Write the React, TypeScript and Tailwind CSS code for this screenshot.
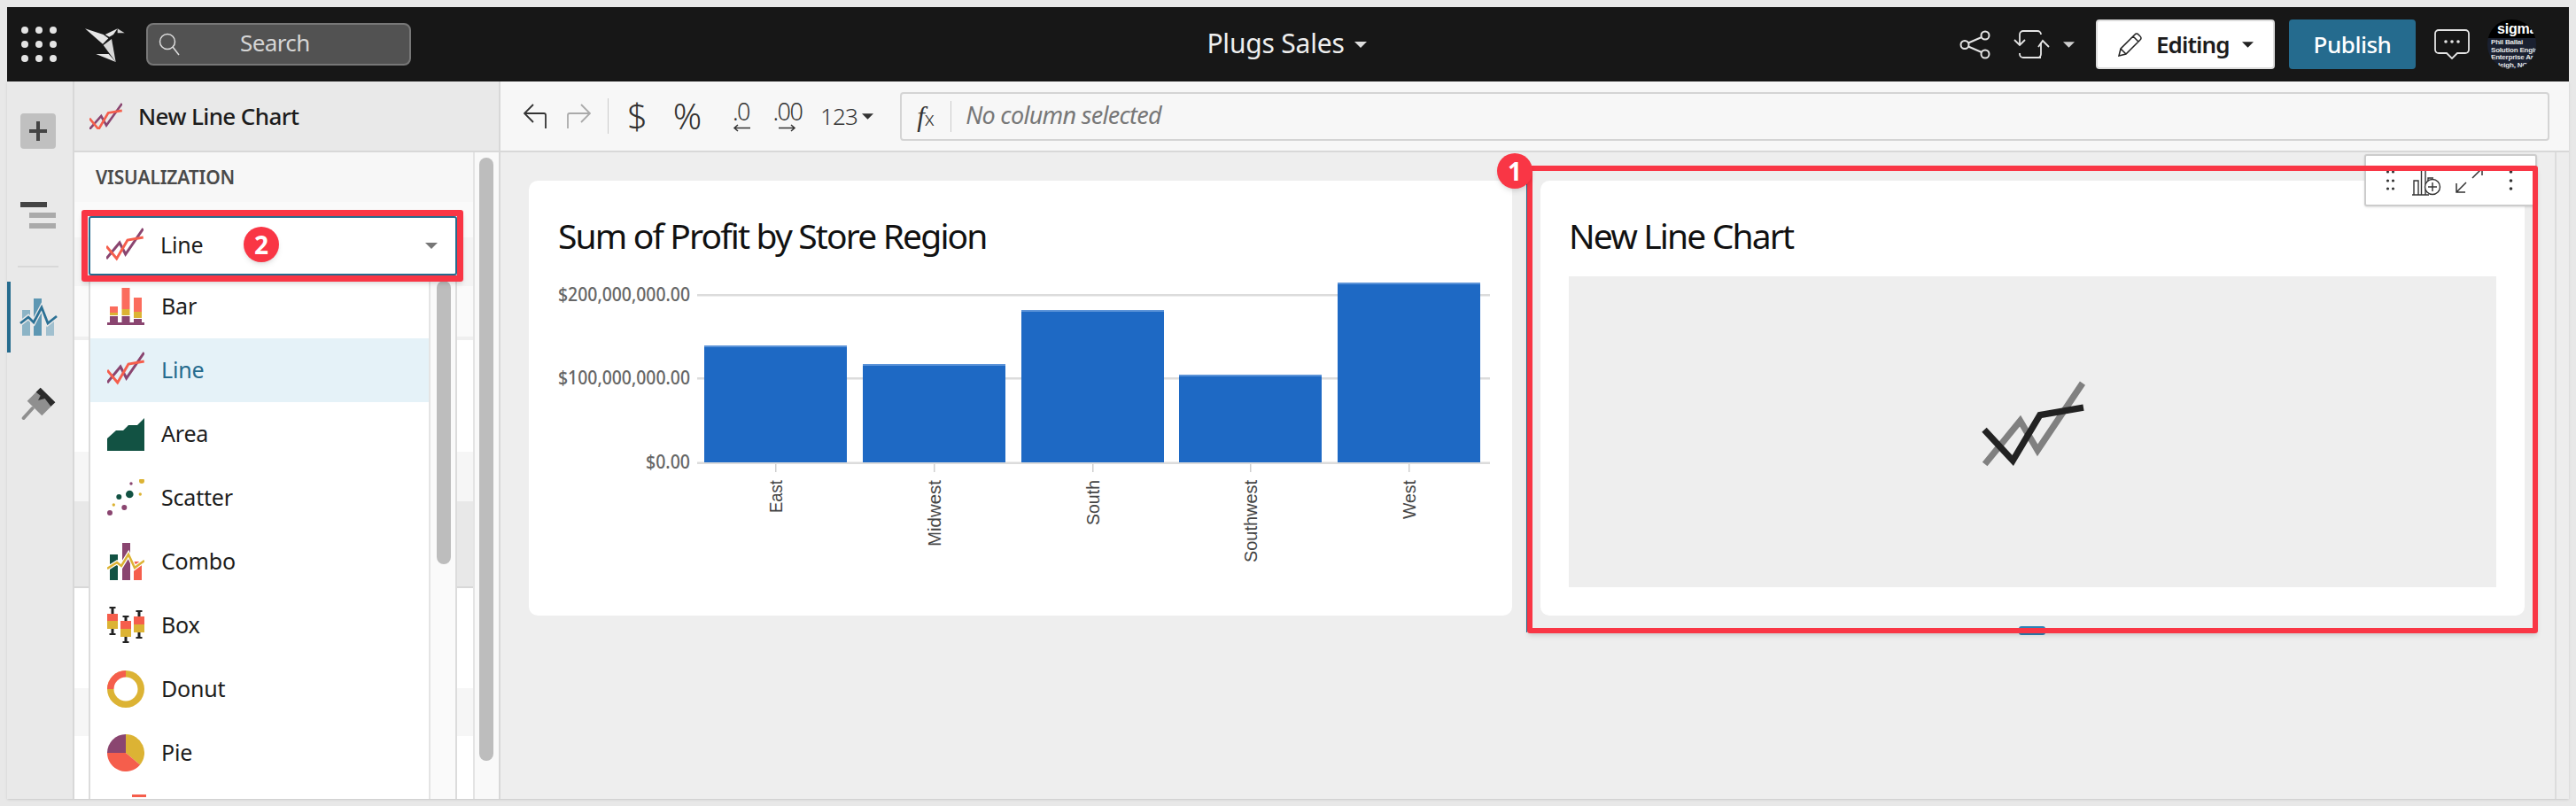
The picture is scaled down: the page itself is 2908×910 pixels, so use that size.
import type { ReactNode } from 'react';

const CORAL = '#f55e4c';
const GOLD = '#dcb334';
const PURPLE = '#8a4570';
const GREEN = '#125243';

function polar(r: number, deg: number) {
  const a = ((deg - 90) * Math.PI) / 180;
  return `${21 + r * Math.cos(a)} ${21 + r * Math.sin(a)}`;
}

function slice(r: number, from: number, to: number) {
  const large = to - from > 180 ? 1 : 0;
  return `M21 21L${polar(r, from)}A${r} ${r} 0 ${large} 1 ${polar(r, to)}Z`;
}

function Ico({ children }: { children: ReactNode }) {
  return (
    <svg width="42" height="42" viewBox="0 0 42 42" className="shrink-0">
      {children}
    </svg>
  );
}

function LineIcon() {
  return (
    <Ico>
      <polyline points="0,35 15,17 21.7,30 41.7,1" fill="none" stroke={PURPLE} strokeWidth="3" />
      <polyline points="0,21 11.7,35 24,14 41.7,11" fill="none" stroke={CORAL} strokeWidth="3" />
    </Ico>
  );
}

function BarIcon() {
  return (
    <Ico>
      <rect x="3" y="21" width="9" height="7" fill="#fb6c5d" />
      <rect x="3" y="28" width="9" height="3" fill={GOLD} />
      <rect x="3" y="32" width="9" height="7" fill={PURPLE} />
      <rect x="16.500" y="0" width="9" height="24" fill="#fb6c5d" />
      <rect x="16.500" y="24" width="9" height="7" fill={GOLD} />
      <rect x="16.500" y="32" width="9" height="7" fill={PURPLE} />
      <rect x="30" y="11" width="9" height="16" fill="#fb6c5d" />
      <rect x="30" y="27" width="9" height="7" fill={GOLD} />
      <rect x="30" y="35" width="9" height="4" fill={PURPLE} />
      <rect x="0" y="39" width="42" height="3" fill={PURPLE} />
    </Ico>
  );
}

function AreaIcon() {
  return (
    <Ico>
      <polygon points="0,40 0,26 10,17 18,17 24,11 34,11 42,3 42,40" fill={GREEN} />
    </Ico>
  );
}

function ScatterIcon() {
  return (
    <Ico>
      <circle cx="39" cy="2" r="3" fill={GOLD} />
      <circle cx="27" cy="5" r="1.700" fill={PURPLE} />
      <circle cx="25.300" cy="17" r="4.300" fill={GREEN} />
      <circle cx="37.300" cy="17" r="1.700" fill={GOLD} />
      <circle cx="13.300" cy="20" r="3" fill={GREEN} />
      <circle cx="7.300" cy="29" r="1.700" fill={GOLD} />
      <circle cx="19.300" cy="32" r="3" fill={PURPLE} />
      <circle cx="3" cy="38" r="3" fill={PURPLE} />
    </Ico>
  );
}

function ComboIcon() {
  return (
    <Ico>
      <rect x="3" y="13" width="9" height="29" fill={GREEN} />
      <polygon points="17,0 26,0 26,42 17,42" fill={PURPLE} />
      <rect x="30" y="21" width="9" height="21" fill={CORAL} />
      <polyline points="0,29 11,22 16,26 24,13 31,28 42,20" fill="none" stroke="#fff" strokeWidth="5" />
      <polyline points="0,29 11,22 16,26 24,13 31,28 42,20" fill="none" stroke={GOLD} strokeWidth="2.500" />
    </Ico>
  );
}

function BoxPlot({ x, top, a, b, c, bottom }: { x: number; top: number; a: number; b: number; c: number; bottom: number }) {
  return (
    <g>
      <rect x={x + 4.500} y={top} width="3" height={bottom - top} fill="#222" />
      <rect x={x + 2.500} y={top} width="7" height="2" fill="#222" />
      <rect x={x + 2.500} y={bottom - 2} width="7" height="2" fill="#222" />
      <rect x={x} y={a} width="12" height={b - a} fill={CORAL} />
      <rect x={x} y={b} width="12" height={c - b} fill={GOLD} />
    </g>
  );
}

function BoxIcon() {
  return (
    <Ico>
      <BoxPlot x={0} top={0} a={8} b={16} c={25} bottom={32} />
      <BoxPlot x={15} top={10} a={16} b={25} c={34} bottom={41} />
      <BoxPlot x={30} top={4} a={11} b={20} c={29} bottom={36} />
    </Ico>
  );
}

function DonutIcon() {
  return (
    <Ico>
      <circle cx="21" cy="21" r="21" fill={GOLD} />
      <path d={slice(21, 270, 360)} fill={CORAL} />
      <circle cx="21" cy="21" r="13.500" fill="#fff" />
    </Ico>
  );
}

function PieIcon() {
  return (
    <Ico>
      <path d={slice(21, 0, 130)} fill={GOLD} />
      <path d={slice(21, 130, 270)} fill={CORAL} />
      <path d={slice(21, 270, 360)} fill={PURPLE} />
    </Ico>
  );
}

const chartTypes = [
  { name: 'Bar', icon: <BarIcon /> },
  { name: 'Line', icon: <LineIcon />, active: true },
  { name: 'Area', icon: <AreaIcon /> },
  { name: 'Scatter', icon: <ScatterIcon /> },
  { name: 'Combo', icon: <ComboIcon /> },
  { name: 'Box', icon: <BoxIcon /> },
  { name: 'Donut', icon: <DonutIcon /> },
  { name: 'Pie', icon: <PieIcon /> },
];

// striped rows sitting behind the dropdown
const panelRows = [
  { h: 55, c: 'bg-[#f4f4f4]' },
  { h: 57, c: 'bg-[#fafafa]' },
  { h: 4, c: 'bg-[#efefef]' },
  { h: 56, c: 'bg-[#ffffff]' },
  { h: 70, c: 'bg-[#ffffff]' },
  { h: 56, c: 'bg-[#f6f6f6]' },
  { h: 96, c: 'bg-[#e8e8e8]' },
  { h: 2, c: 'bg-[#d8d8d8]' },
  { h: 113, c: 'bg-[#ffffff]' },
  { h: 54, c: 'bg-[#f6f6f6]' },
  { h: 71, c: 'bg-[#ffffff]' },
];

const bars = [
  { name: 'East', x: 795, top: 390, len: 37 },
  { name: 'Midwest', x: 974, top: 411, len: 75 },
  { name: 'South', x: 1153, top: 350, len: 51 },
  { name: 'Southwest', x: 1331, top: 423, len: 93 },
  { name: 'West', x: 1510, top: 319, len: 44 },
];

function ProfitChart() {
  return (
    <svg width="1060" height="351" viewBox="630 312 1060 351" className="block">
      {[333, 427, 522.500].map((y) => (
        <rect key={y} x="787" y={y - 1} width="895" height="2.500" fill="#dcdcdc" />
      ))}
      {[
        { y: 333, t: '$200,000,000.00', l: 149 },
        { y: 427, t: '$100,000,000.00', l: 149 },
        { y: 522, t: '$0.00', l: 50 },
      ].map((a) => (
        <text key={a.t} x="779" y={a.y + 7} textAnchor="end" fontSize="22" fontWeight="500" fill="#666" textLength={a.l} lengthAdjust="spacingAndGlyphs" fontFamily="Noto Sans, sans-serif">
          {a.t}
        </text>
      ))}
      {bars.map((b) => (
        <g key={b.name}>
          <rect x={b.x} y={b.top} width="161" height={522 - b.top} fill="#1e69c4" />
          <rect x={b.x} y={b.top} width="161" height="2" fill="#5b93d8" />
          <rect x={b.x + 80} y="524" width="1.500" height="9" fill="#cfcfcf" />
          <text
            transform={`translate(${b.x + 87.500} 542) rotate(-90)`}
            textAnchor="end"
            fontSize="21"
            fill="#444"
            textLength={b.len}
            lengthAdjust="spacingAndGlyphs"
            fontFamily="Liberation Sans, sans-serif">
            {b.name}
          </text>
        </g>
      ))}
    </svg>
  );
}

function Caret({ className }: { className: string }) {
  return (
    <svg viewBox="0 0 14 7" className={className}>
      <polygon points="0,0 14,0 7,7" fill="currentColor" />
    </svg>
  );
}

function DecimalGlyph({ label, dir }: { label: string; dir: 'left' | 'right' }) {
  return (
    <span className="flex flex-col items-center w-full">
      <span className="text-[27px] leading-[26px] font-light tracking-[-1.5px] text-[#333]">{label}</span>
      <svg width="20" height="9" viewBox="0 0 20 9" className="mt-[1px]">
        {dir === 'left' ? (
          <path d="M20 4.500H2M6 1L2 4.500L6 8" fill="none" stroke="#333" strokeWidth="1.500" />
        ) : (
          <path d="M0 4.500H18M14 1L18 4.500L14 8" fill="none" stroke="#333" strokeWidth="1.500" />
        )}
      </svg>
    </span>
  );
}

function TopBar() {
  return (
    <header className="h-[84px] bg-[#171717] flex items-center shrink-0">
      <div className="flex-1 flex items-center pl-[16px]">
        <svg width="40" height="40" viewBox="0 0 40 40" className="shrink-0">
          {[4, 20, 36].map((y) =>
            [4, 20, 36].map((x) => <circle key={`${x}-${y}`} cx={x} cy={y} r="4" fill="#e4e4e4" />),
          )}
        </svg>
        <svg width="60" height="50" viewBox="0 0 180 150" className="ml-[26px] shrink-0">
          <polygon points="18,22 80,42 97,55 78,74" fill="#e6e6e6" />
          <polygon points="108,57 80,78 122,135" fill="#d8d8d8" />
          <polygon points="86,42 128,22 114,42 100,50" fill="#e6e6e6" />
          <polygon points="128,22 152,37 128,37" fill="#cfcfcf" />
          <polygon points="55,108 98,108 122,135" fill="#e6e6e6" />
        </svg>
        <div className="ml-[15px] w-[299px] h-[48px] rounded-[8px] bg-[#525252] border-2 border-[#777] flex items-center relative">
          <svg width="24" height="26" viewBox="0 0 24 26" className="ml-[12px] shrink-0">
            <circle cx="10" cy="10" r="8.500" fill="none" stroke="#ddd" strokeWidth="1.500" />
            <path d="M16 16L23 25" stroke="#ddd" strokeWidth="1.500" />
          </svg>
          <span className="ml-[68px] mt-[-3px] text-[26px] text-[#d5d5d5] tracking-[-0.6px]">Search</span>
        </div>
      </div>
      <div className="ml-[18px] flex items-center text-[#eeeeee] text-[30px] tracking-[-0.2px]">
        <span className="mt-[-3px]">Plugs Sales</span>
        <Caret className="w-[14px] h-[7px] ml-[11px] text-[#ddd]" />
      </div>
      <div className="flex-1 flex items-center justify-end pr-[37px]">
        <svg width="36" height="33" viewBox="0 0 36 33" className="shrink-0">
          <circle cx="29" cy="6" r="4.500" fill="none" stroke="#e4e4e4" strokeWidth="2" />
          <circle cx="6" cy="16.500" r="4.500" fill="none" stroke="#e4e4e4" strokeWidth="2" />
          <circle cx="29" cy="27" r="4.500" fill="none" stroke="#e4e4e4" strokeWidth="2" />
          <path d="M10 14.500L25 8M10 18.500L25 25" stroke="#e4e4e4" strokeWidth="2" />
        </svg>
        <svg width="41" height="32" viewBox="0 0 41 32" className="ml-[25px] shrink-0">
          <path d="M7 16V5a4 4 0 0 1 4-4H27a4 4 0 0 1 4 4V5M31 31H11M31 31M31 14V27a4 4 0 0 1-4 4M7 26V27a4 4 0 0 0 4 4" fill="none" stroke="#e4e4e4" strokeWidth="1.800" />
          <path d="M1 11L7 17L13 11M28 19L33 12L40 19" fill="none" stroke="#e4e4e4" strokeWidth="1.800" />
        </svg>
        <Caret className="w-[13px] h-[7px] ml-[15px] text-[#cfcfcf]" />
        <button className="ml-[24px] w-[202px] h-[56px] bg-white rounded-[4px] border-2 border-[#ddd] flex items-center pl-[23px]">
          <svg width="27" height="27" viewBox="0 0 27 27" className="shrink-0">
            <path d="M1 26L3 18L19 2a2.500 2.500 0 0 1 4 0L25 4a2.500 2.500 0 0 1 0 4L9 24ZM3 18L9 24M17 4L23 10" fill="none" stroke="#222" strokeWidth="1.500" />
          </svg>
          <span className="ml-[16px] text-[26px] font-semibold text-[#1c1c1c] tracking-[-0.9px]">Editing</span>
          <Caret className="w-[13px] h-[7px] ml-[14px] text-[#222]" />
        </button>
        <button className="ml-[16px] w-[143px] h-[56px] bg-[#256b8e] rounded-[4px] text-white text-[26px] font-medium tracking-[-0.5px]">
          Publish
        </button>
        <svg width="40" height="34" viewBox="0 0 40 34" className="ml-[21px] shrink-0">
          <path d="M5 1H35a4 4 0 0 1 4 4V23a4 4 0 0 1-4 4H26L20 33L14 27H5a4 4 0 0 1-4-4V5a4 4 0 0 1 4-4Z" fill="none" stroke="#e4e4e4" strokeWidth="1.800" />
          <circle cx="13" cy="14" r="1.800" fill="#e4e4e4" />
          <circle cx="20" cy="14" r="1.800" fill="#e4e4e4" />
          <circle cx="27" cy="14" r="1.800" fill="#e4e4e4" />
        </svg>
        <div className="ml-[20px] w-[55px] h-[56px] rounded-full overflow-hidden flex flex-col shrink-0">
          <div className="h-[22px] bg-black flex items-center pl-[7px] gap-[4px]">
            <svg width="9" height="16" viewBox="0 0 9 16">
              <polygon points="1,1 8,0 6,5 8,15 1,15 4,8" fill="#2fb9a0" />
            </svg>
            <span className="text-[16px] leading-[20px] font-bold text-white tracking-[-0.2px] font-['Liberation_Sans',sans-serif]">sigma</span>
          </div>
          <div className="flex-1 bg-[#1a2030] pl-[4px] pt-[1px] text-[8px] leading-[8.5px] font-bold whitespace-nowrap text-[#e4e4e4] tracking-[-0.2px] font-['Liberation_Sans',sans-serif]">
            <div>Phil Ballai</div>
            <div>Solution Engine</div>
            <div>Enterprise Arch</div>
            <div className="pl-[8px]">leigh, NC</div>
          </div>
        </div>
      </div>
    </header>
  );
}

function Rail() {
  return (
    <aside className="w-[76px] shrink-0 bg-[#e9e9e9] border-r-2 border-[#d8d8d8] flex flex-col">
      <button className="ml-[15px] mt-[36px] w-[40px] h-[40px] bg-[#c0c0c0] rounded-[4px] flex items-center justify-center">
        <svg width="20" height="22" viewBox="0 0 20 22">
          <path d="M0 11H20M10 0V22" stroke="#444" strokeWidth="4" />
        </svg>
      </button>
      <div className="ml-[15px] mt-[60px] flex flex-col items-start">
        <div className="w-[30px] h-[6px] bg-[#444]" />
        <div className="ml-[10px] mt-[6px] w-[30px] h-[6px] bg-[#aaa]" />
        <div className="ml-[10px] mt-[6px] w-[30px] h-[6px] bg-[#aaa]" />
      </div>
      <div className="ml-[12px] mt-[42px] w-[46px] h-[2px] bg-[#d8d8d8]" />
      <div className="mt-[16px] h-[80px] border-l-4 border-[#256b8e] flex items-center pl-[10px]">
        <svg width="43" height="43" viewBox="0 0 43 43">
          <rect x="3" y="13" width="9" height="29" fill="#8cb4c6" />
          <rect x="16" y="0" width="9" height="42" fill="#5d97b3" />
          <rect x="30" y="26" width="9" height="16" fill="#a1c0cf" />
          <polyline points="1,28 10,21 16,27 25,10 32,28 42,20" fill="none" stroke="#e9e9e9" strokeWidth="5.500" />
          <polyline points="1,28 10,21 16,27 25,10 32,28 42,20" fill="none" stroke="#2c7195" strokeWidth="2.800" />
        </svg>
      </div>
      <svg width="40" height="38" viewBox="40 330 120 114" className="ml-[16px] mt-[38px]">
        <polygon points="60,380 105,335 155,385 110,430" fill="#8f8f8f" />
        <polygon points="90,350 105,335 155,385 140,398 120,372 97,378 105,362" fill="#2b2b2b" />
        <path d="M78,405L48,438" stroke="#8f8f8f" strokeWidth="12" strokeLinecap="round" />
      </svg>
    </aside>
  );
}

function SidePanel() {
  return (
    <section className="w-[481px] shrink-0 flex flex-col border-r-2 border-[#d8d8d8]">
      <div className="h-[80px] shrink-0 bg-[#e9e9e9] border-b-2 border-[#d8d8d8] flex items-center pl-[17px]">
        <svg width="37" height="30" viewBox="0 0 42 34" className="shrink-0">
          <polyline points="0,34 15,17 21.700,29 41.700,1" fill="none" stroke={PURPLE} strokeWidth="3" />
          <polyline points="0,20 11.700,34 24,13 41.700,10" fill="none" stroke={CORAL} strokeWidth="3" />
        </svg>
        <span className="ml-[18px] text-[26px] font-medium text-[#1c1c1c] tracking-[-0.6px]">New Line Chart</span>
      </div>
      <div className="flex-1 flex min-h-0">
        <div className="w-[450px] flex flex-col">
          <div className="h-[56px] bg-[#f7f7f7] flex items-center pl-[24px] pt-[2px] text-[21px] font-semibold text-[#4a4a4a] tracking-[-0.15px] shrink-0">
            VISUALIZATION
          </div>
          <div className="h-[40px] shrink-0 bg-[#fafafa]" />
          <div className="flex flex-col flex-1 overflow-hidden">
            {panelRows.map((r, i) => (
              <div key={i} className={r.c} style={{ height: r.h, flexShrink: 0 }} />
            ))}
          </div>
        </div>
        <div className="flex-1 bg-[#f9f9f9] border-l-2 border-[#e4e4e4] pl-[5px] pt-[6px]">
          <div className="w-[16px] h-[681px] bg-[#bdbdbd] rounded-full" />
        </div>
      </div>
    </section>
  );
}

function Toolbar() {
  return (
    <div className="h-[80px] shrink-0 bg-[#f7f7f7] border-b-2 border-[#d8d8d8] flex items-center pl-[26px] pr-[22px]">
      <svg width="26" height="28" viewBox="0 0 26 28" className="shrink-0">
        <path d="M25 28V13a2 2 0 0 0-2-2H2M11 1L1 11L11 21" fill="none" stroke="#333" strokeWidth="1.800" />
      </svg>
      <svg width="27" height="28" viewBox="0 0 27 28" className="ml-[23px] shrink-0">
        <path d="M1 28V13a2 2 0 0 1 2-2H25M16 1L26 11L16 21" fill="none" stroke="#aaa" strokeWidth="1.800" />
      </svg>
      <div className="ml-[19px] w-[1px] h-[40px] bg-[#ccc]" />
      <span className="ml-[21px] w-[22px] text-center text-[40px] leading-none font-light text-[#333]">$</span>
      <span className="ml-[27px] w-[36px] text-center text-[40px] leading-none font-light text-[#333] tracking-[-2px]">%</span>
      <div className="ml-[27px] w-[33px]">
        <DecimalGlyph label=".0" dir="left" />
      </div>
      <div className="ml-[17px] w-[38px]">
        <DecimalGlyph label=".00" dir="right" />
      </div>
      <span className="ml-[18px] text-[26px] text-[#333] font-light tracking-[-0.8px]">123</span>
      <Caret className="w-[13px] h-[7px] ml-[5px] text-[#333]" />
      <div className="ml-[30px] flex-1 h-[55px] rounded-[4px] border-2 border-[#d4d4d4] bg-[#f7f7f7] flex items-center pl-[17px]">
        <span className="w-[24px] font-['Liberation_Serif',serif] italic text-[#333] text-[31px] leading-none">
          f<span className="not-italic font-['Noto_Sans',sans-serif] font-light text-[22px]">x</span>
        </span>
        <div className="ml-[14px] w-[1px] h-[35px] bg-[#ccc]" />
        <span className="ml-[16px] text-[27px] leading-[32px] mt-[-2px] italic text-[#777] tracking-[-0.7px]">No column selected</span>
      </div>
    </div>
  );
}

function Canvas() {
  return (
    <div className="flex-1 flex min-h-0">
      <div className="flex-1 bg-[#eeeeee] pl-[32px] pt-[32px] flex gap-[32px] items-start">
        <div className="w-[1110px] h-[491px] bg-white rounded-[10px] pl-[33px]">
          <h2 className="mt-[38px] h-[48px] flex items-center text-[39px] text-[#111] tracking-[-1.85px]">Sum of Profit by Store Region</h2>
          <div className="mt-[22px]">
            <ProfitChart />
          </div>
        </div>
        <div className="w-[1111px] h-[491px] bg-white rounded-[10px] pl-[32px]">
          <h2 className="mt-[38px] h-[48px] flex items-center text-[39px] text-[#111] tracking-[-1.85px]">New Line Chart</h2>
          <div className="mt-[22px] w-[1047px] h-[351px] bg-[#eeeeee] flex items-center justify-center">
            <svg width="127" height="103" viewBox="240 80 380 310" className="mt-[-18px]">
              <polyline points="268,372 388,225 447,325 600,97" fill="none" stroke="#808080" strokeWidth="22" />
              <polyline points="266,255 363,360 455,205 603,180" fill="none" stroke="#222" strokeWidth="22" />
            </svg>
          </div>
        </div>
      </div>
      <div className="w-[16px] shrink-0 bg-[#ededed] border-l-2 border-[#dcdcdc]" />
    </div>
  );
}

function Overlays() {
  return (
    <>
      {/* dropdown list */}
      <div className="absolute left-[100px] top-[310px] w-[416px] h-[592px] bg-white border-x-2 border-[#dcdcdc] flex overflow-hidden">
        <div className="w-[384px] border-r-2 border-[#e4e4e4]">
          {chartTypes.map((c) => (
            <div key={c.name} className={`h-[72px] flex items-center pl-[19px] ${c.active ? 'bg-[#e5f2f8]' : 'bg-white'}`}>
              {c.icon}
              <span className={`ml-[19px] text-[25px] tracking-[-0.2px] ${c.active ? 'text-[#256b8e]' : 'text-[#1c1c1c]'}`}>{c.name}</span>
            </div>
          ))}
          <div className="ml-[47px] mt-[11px] w-[16px] h-[3px] bg-[#f55e4c]" />
        </div>
        <div className="flex-1 bg-[#fafafa] pl-[7px] pt-[7px]">
          <div className="w-[16px] h-[320px] bg-[#bdbdbd] rounded-full" />
        </div>
      </div>

      {/* selected value, boxed in red */}
      <div className="absolute left-[92px] top-[237px] w-[431px] h-[81px] border-[7px] border-[#f93645] rounded-[3px] shadow-md">
        <div className="h-full w-[416px] ml-px bg-white border-2 border-[#256b8e] rounded-[3px] flex items-center pl-[18px]">
          <LineIcon />
          <span className="ml-[19px] mt-[-2px] text-[25px] tracking-[-0.2px] text-[#1c1c1c]">Line</span>
          <Caret className="ml-auto mr-[20px] w-[14px] h-[7px] text-[#777]" />
        </div>
      </div>
      <span className="absolute left-[275px] top-[256px] w-[40px] h-[40px] rounded-full bg-[#f93645] text-white text-[28px] font-bold flex items-center justify-center shadow-md">
        2
      </span>

      {/* element toolbar */}
      <div className="absolute left-[2669px] top-[174px] w-[195px] h-[59px] bg-white border-2 border-[#ccc] rounded-[3px] shadow-sm">
        <svg width="195" height="59" viewBox="2669 174 195 59" className="absolute left-[-2px] top-[-2px]">
          {[194, 204, 213].map((y) => (
            <g key={y}>
              <circle cx="2695.500" cy={y} r="1.600" fill="#333" />
              <circle cx="2701.500" cy={y} r="1.600" fill="#333" />
              <circle cx="2834.500" cy={y} r="1.800" fill="#333" />
            </g>
          ))}
          <path d="M2723 220H2742M2725 220V204H2730V220M2733.500 220V192H2738V220M2741 208V201H2747" fill="none" stroke="#333" strokeWidth="1.400" />
          <circle cx="2746" cy="211" r="8.500" fill="#fff" stroke="#333" strokeWidth="1.400" />
          <path d="M2741 211H2751M2746 206V216" stroke="#333" strokeWidth="1.400" />
          <path d="M2773 217L2784 206M2773 207V217H2783M2791 201L2802 190M2795 191H2802V198" fill="none" stroke="#333" strokeWidth="1.500" />
        </svg>
      </div>

      {/* selected element, boxed in red */}
      <div className="absolute left-[1723px] top-[204px] w-[1px] h-[510px] bg-[#256b8e]" />
      <div className="absolute left-[2279px] top-[707px] w-[30px] h-[10px] rounded-[3px] bg-[#2d82b5]" />
      <div className="absolute left-[1724px] top-[187px] w-[1141px] h-[528px] border-[6px] border-[#f93645] rounded-[3px] shadow-md" />
      <span className="absolute left-[1690px] top-[173px] w-[40px] h-[40px] rounded-full bg-[#f93645] text-white text-[28px] font-bold flex items-center justify-center shadow-md">
        1
      </span>
    </>
  );
}

export default function App() {
  return (
    <div className="relative w-[2908px] h-[910px] overflow-hidden bg-[#e8e8e8] p-[8px] flex flex-col font-['Noto_Sans',sans-serif]">
      <TopBar />
      <div className="flex-1 flex min-h-0 shadow-sm">
        <Rail />
        <SidePanel />
        <main className="flex-1 flex flex-col min-w-0">
          <Toolbar />
          <Canvas />
        </main>
      </div>
      <Overlays />
    </div>
  );
}
